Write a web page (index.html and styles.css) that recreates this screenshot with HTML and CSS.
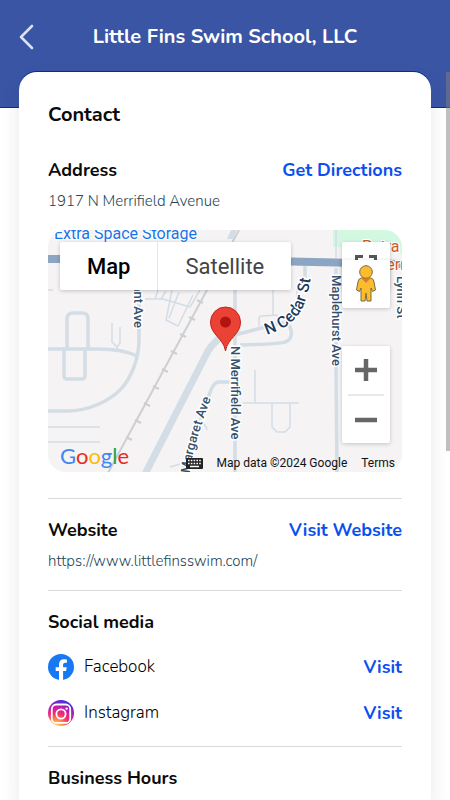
FILE: index.html
```html
<!DOCTYPE html>
<html lang="en">
<head>
<meta charset="utf-8">
<meta name="viewport" content="width=device-width, initial-scale=1">
<title>Little Fins Swim School, LLC</title>
<link rel="stylesheet" href="styles.css">
</head>
<body>
<header class="topbar">
  <button class="back" type="button" aria-label="Back">
    <svg width="16" height="26" viewBox="0 0 16 26"><path d="M14 2 3 13l11 11" fill="none" stroke="currentColor" stroke-width="2.6" stroke-linecap="round" stroke-linejoin="round"/></svg>
  </button>
  <h1 class="title">Little Fins Swim School, LLC</h1>
</header>
<main class="card">
  <h2 class="heading">Contact</h2>

  <section class="block address">
    <div class="row">
      <h3 class="label">Address</h3>
      <a class="action" href="#directions">Get Directions</a>
    </div>
    <p class="detail">1917 N Merrifield Avenue</p>
    <div class="map">
      <svg class="map-art" viewBox="0 0 354 242" preserveAspectRatio="xMidYMid slice" role="img" aria-label="Street map">
        <rect width="354" height="242" fill="#f5f3f4"/>
        <path d="M285 0h69v25l-12-8h-57z" fill="#d3f8e2"/>
        <g fill="none" stroke="#d3dde5" stroke-width="1.5" stroke-linejoin="round">
          <path d="M0 60h5M0 197h52M0 212h52M64 93v19l5 5 3-4v-16M69 117v3"/>
          <path d="M97 69h18l27 8M124 60l-6 30 12 6 15-31M110 60l-3 9M131 62l-10 26M118 61l-5 8M142 77l10-17"/>
          <path d="M225 57v28M211 96v-7q0-3 3-3l15-1 3 8M249 58v9M288 0v28"/>
          <path d="M207 140v33M194 173h57M224 173v24l5 5h8l5-5v-24M150 190q8 4 9 10M122 237l10-3"/>
        </g>
        <g fill="none" stroke="#d3dde5" stroke-width="3.5" stroke-linejoin="round">
          <path d="M19 120V89q0-6 6-6h9q6 0 6 6v31M16 119v27q0 3 3 3h15q3 0 3-3v-27"/>
          <path d="M0 119h50q25 0 39 7M91 60v50C91 130 82 150 72 160S42 181 19 181H0"/>
          <path d="M182 152h-12q-6 1-11 20l-25 70M187 57v185M257 34v14M288 38v100l1 104"/>
          <path d="M172 109l45-12 20-5q4 1 6 8 2 9-6 12-4 2-45 3"/>
        </g>
        <path d="M96 246 160 121q6-10 21-20" fill="none" stroke="#d3dde5" stroke-width="7"/>
        <path d="M183 0h6l-4 9h-6z" fill="#d3dde5"/>
        <g fill="none" stroke="#cdcfd1">
          <path d="M192-2 159 60 60 243" stroke-width="2"/>
          <path d="m149 70 6 3m-14 14 6 3m-15 14 6 3m-15 14 6 3m-15 15 6 3m-15 14 6 3m-15 14 6 3m-15 14 6 3m-15 14 6 3" stroke-width="2"/>
        </g>
        <path d="M0 29h20L243 31.500 354 34" fill="none" stroke="#8ba5c3" stroke-width="8"/>
        <g class="place">
          <text class="shop" x="149" y="9" text-anchor="end">Extra Space Storage</text>
          <text class="food" x="314" y="22">Petra</text>
          <text class="food" x="361" y="40" text-anchor="end">Intern</text>
        </g>
        <g class="street">
          <text transform="translate(86 98) rotate(90)" text-anchor="end">Grant Ave</text>
          <text transform="translate(284 45) rotate(90)">Maplehurst Ave</text>
          <text transform="translate(183 116) rotate(90)">N Merrifield Ave</text>
          <text transform="translate(349 46) rotate(90)">Lynn St</text>
          <path id="margaret" d="M142 243 Q144 218 164 166" fill="none" stroke="none"/>
          <text><textPath href="#margaret">Margaret Ave</textPath></text>
          <path id="cedar" d="M219 105 L234 99 Q252 88 257 72 Q262 58 264 36" fill="none"/>
          <text class="wide"><textPath href="#cedar">N Cedar St</textPath></text>
        </g>
        <g>
          <path d="M177.500 121c-2-13-15-16-15-29a15 15 0 0 1 30 0c0 13-13 16-15 29z" fill="#ea4335" stroke="#c5221f"/>
          <circle cx="177.500" cy="92" r="5.500" fill="#b31412"/>
        </g>
      </svg>
      <div class="map-types">
        <button class="type selected" type="button">Map</button>
        <button class="type" type="button">Satellite</button>
      </div>
      <button class="tool fullscreen" type="button" aria-label="Toggle fullscreen view">
        <svg width="22" height="22" viewBox="0 0 22 22"><path d="M1.500 7V1.500H8M14 1.500h6.500V7M1.500 15v5.500H8M14 20.500h6.500V15" fill="none" stroke="#555" stroke-width="3"/></svg>
      </button>
      <button class="tool pegman" type="button" aria-label="Street View">
        <svg width="22" height="38" viewBox="0 0 22 38"><g fill="#fbbc2d" stroke="#7a6a45" stroke-width="1"><path d="M6 13h10q3 1 3 4l1.500 8-3 1.500L16 23v13h-4l-1-8-1 8H6V23l-1.500 3.500-3-1.500L3 17q0-3 3-4z"/><circle cx="11" cy="7" r="6.300"/></g><path d="M6.500 13.500h9L11 18z" fill="#e07a2f"/></svg>
      </button>
      <div class="zoom">
        <button class="zoom-btn" type="button" aria-label="Zoom in"><svg width="22" height="22" viewBox="0 0 22 22"><path d="M11 0v22M0 11h22" stroke="#666" stroke-width="4.500"/></svg></button>
        <button class="zoom-btn" type="button" aria-label="Zoom out"><svg width="22" height="22" viewBox="0 0 22 22"><path d="M0 11h22" stroke="#666" stroke-width="4.500"/></svg></button>
      </div>
      <div class="map-foot">
        <span class="google" aria-label="Google"><span class="g1">G</span><span class="g2">o</span><span class="g3">o</span><span class="g1">g</span><span class="g4">l</span><span class="g2">e</span></span>
        <button class="keys" type="button" aria-label="Keyboard shortcuts"><svg width="17" height="11" viewBox="0 0 17 11"><rect width="17" height="11" rx="1" fill="#222"/><path d="M2 2.500h13M2 5.500h13" stroke="#fff" stroke-width="1.500" stroke-dasharray="1.600 1.200"/><path d="M4 8.500h9" stroke="#fff" stroke-width="1.300"/></svg></button>
        <span class="credit">Map data ©2024 Google</span>
        <a class="terms" href="#terms">Terms</a>
      </div>
    </div>
  </section>

  <section class="block ruled website">
    <div class="row">
      <h3 class="label">Website</h3>
      <a class="action" href="#website">Visit Website</a>
    </div>
    <p class="detail">https://www.littlefinsswim.com/</p>
  </section>

  <section class="block ruled">
    <h3 class="label">Social media</h3>
    <ul class="socials">
      <li class="row">
        <svg class="logo" viewBox="0 0 26 26"><circle cx="13" cy="13" r="13" fill="#1877f2"/><path d="M11 26v-9H7.700v-3.800H11v-2.900c0-3.300 2-5.100 5-5.100 1.400 0 2.900.3 2.900.3v3.200h-1.600c-1.600 0-2.200 1-2.200 2v2.500h3.600l-.6 3.800h-3V26z" fill="#fff"/></svg>
        <span class="network">Facebook</span>
        <a class="action" href="#facebook">Visit</a>
      </li>
      <li class="row">
        <svg class="logo" viewBox="0 0 26 26"><defs><radialGradient id="ig" cx=".3" cy="1.050" r="1.050"><stop offset="0" stop-color="#ffdc6b"/><stop offset=".25" stop-color="#ff9a48"/><stop offset=".5" stop-color="#f5306a"/><stop offset=".75" stop-color="#c21bb0"/><stop offset="1" stop-color="#4a2be0"/></radialGradient></defs><circle cx="13" cy="13" r="13" fill="url(#ig)"/><g fill="none" stroke="#fff" stroke-width="1.800"><rect x="3.800" y="4.500" width="18.400" height="18.400" rx="4.500"/><circle cx="13" cy="14" r="4.600"/></g><circle cx="18.600" cy="8.600" r="1.200" fill="#fff"/></svg>
        <span class="network">Instagram</span>
        <a class="action" href="#instagram">Visit</a>
      </li>
    </ul>
  </section>

  <section class="block ruled">
    <h3 class="label">Business Hours</h3>
  </section>
</main>
<div class="scroll-thumb"></div>
</body>
</html>
```

FILE: styles.css
```css
* { box-sizing: border-box; }
body {
  margin: 0;
  min-height: 100vh;
  display: flex;
  flex-direction: column;
  background: #fff;
  color: #0b0b0b;
  font-family: Nunito, Lato, "Open Sans", sans-serif;
}
h1, h2, h3, p, ul { margin: 0; padding: 0; }
button { border: 0; padding: 0; background: none; font: inherit; color: inherit; cursor: pointer; }
a { text-decoration: none; }
svg { display: block; }

.topbar {
  display: grid;
  grid-template-columns: 36px 1fr 36px;
  align-items: center;
  align-content: start;
  height: 108px;
  padding: 21px 18px 0;
  background: #3a55a4;
  border-bottom: 1px solid #0b2b90;
  color: #fff;
}
.back { display: flex; align-items: center; height: 32px; color: #dbe1f2; }
.title { font-size: 20px; line-height: 32px; font-weight: 700; text-align: center; white-space: nowrap; }

.card {
  flex: 1;
  margin: -36px 19px 0;
  padding: 29px 29px 10px;
  background: #fff;
  border-radius: 18px 18px 0 0;
  box-shadow: 0 -1px 0 #0b2b90, 0 10px 20px rgba(40, 40, 70, .1);
}
.heading { font-size: 20px; line-height: 28px; font-weight: 700; margin-bottom: 29px; }
.label, .action { font-size: 18px; line-height: 24px; font-weight: 700; }
.action { margin-left: auto; color: #0b4ff0; }
.detail { margin-top: 9px; font-size: 15px; line-height: 20px; font-weight: 300; color: #254556; }
.row { display: flex; align-items: center; }
.address { padding-bottom: 26px; }
.ruled { border-top: 1px solid #d9d9d9; padding-top: 19px; }
.website { padding-bottom: 19px; }

.socials { list-style: none; display: grid; gap: 20px; padding: 20px 0; }
.socials .row { height: 26px; }
.logo { width: 26px; height: 26px; }
.network { margin-left: 10px; font-size: 17px; line-height: 24px; font-weight: 300; color: #000; }

.map {
  position: relative;
  height: 242px;
  margin-top: 19px;
  border-radius: 18px;
  overflow: hidden;
  background: #f5f3f4;
  font-family: Roboto, "Liberation Sans", sans-serif;
}
.map-art { width: 100%; height: 100%; }
.place text { font-size: 16px; stroke: #fff; stroke-width: 2px; paint-order: stroke; }
.shop { fill: #1a73e8; }
.food { fill: #d2591f; }
.street text { font-size: 13px; font-weight: 500; fill: #34506c; stroke: #fff; stroke-width: 3px; paint-order: stroke; }
.street .wide { font-size: 16px; fill: #1d3a5a; }

.map-types {
  position: absolute;
  top: 12px;
  left: 12px;
  display: flex;
  background: #fff;
  border-radius: 2px;
  box-shadow: 0 1px 4px rgba(0, 0, 0, .2);
}
.type { height: 48px; padding: 0 27px; font-size: 22px; color: #444; }
.type.selected { font-weight: 500; color: #000; border-right: 1px solid #e6e6e6; }
.tool {
  position: absolute;
  right: 12px;
  width: 48px;
  height: 48px;
  display: grid;
  place-items: center;
  background: #fff;
  border-radius: 2px;
  box-shadow: 0 1px 4px rgba(0, 0, 0, .2);
}
.fullscreen { top: 12px; }
.pegman { top: 30px; }
.zoom {
  position: absolute;
  top: 116px;
  right: 12px;
  width: 48px;
  padding: 0 6px;
  background: #fff;
  border-radius: 2px;
  box-shadow: 0 1px 4px rgba(0, 0, 0, .2);
}
.zoom-btn { width: 100%; height: 48px; display: grid; place-items: center; }
.zoom-btn + .zoom-btn { border-top: 2px solid #e8e8e8; height: 49px; }
.map-foot {
  position: absolute;
  right: 7px;
  bottom: 0;
  left: 12px;
  height: 18px;
  display: flex;
  align-items: center;
  font-size: 12px;
  line-height: 18px;
  color: #111;
}
.google { margin-right: auto; padding-bottom: 14px; font-family: Lato, sans-serif; font-size: 22px; }
.g1 { color: #4285f4; }
.g2 { color: #ea2a1c; }
.g3 { color: #fbbc05; }
.g4 { color: #1fa34a; }
.credit { margin: 0 14px; }
.terms { color: inherit; }

.scroll-thumb {
  position: fixed;
  top: 72px;
  right: 0;
  width: 4px;
  height: 379px;
  background: rgba(128, 128, 128, .5);
}
```
